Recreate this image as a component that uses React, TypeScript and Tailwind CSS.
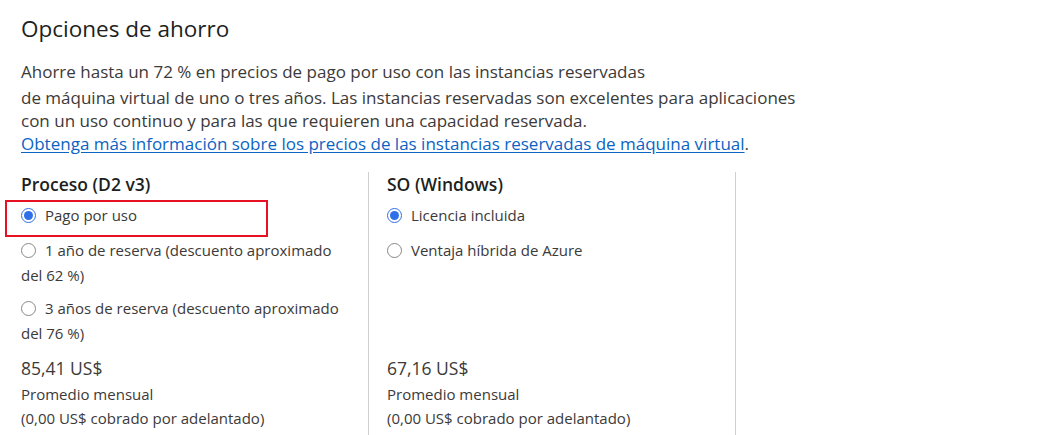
import React from "react";

function Radio({ checked }: { checked?: boolean }) {
  return checked ? (
    <span className="mt-[5px] w-[15px] h-[15px] shrink-0 rounded-full border-[1.5px] border-[#2f6fe8] flex items-center justify-center bg-white">
      <span className="w-[9px] h-[9px] rounded-full bg-[#2f6fe8]" />
    </span>
  ) : (
    <span className="mt-[5px] w-[15px] h-[15px] shrink-0 rounded-full border border-[#8a8886] bg-white" />
  );
}

function Option({ checked, className, children }: { checked?: boolean; className?: string; children: React.ReactNode }) {
  return (
    <div className={"flex items-start gap-[9px] " + (className ?? "")}>
      <Radio checked={checked} />
      <span>{children}</span>
    </div>
  );
}

export default function App() {
  return (
    <div
      className="h-[435px] w-[1048px] overflow-hidden bg-white text-[#323130] pl-[21px]"
      style={{ fontFamily: '"Open Sans", "Noto Sans", Arial, sans-serif' }}
    >
      <h2 className="pt-[14px] text-[22.5px] leading-[30px] text-[#201f1e]">Opciones de ahorro</h2>

      <div className="mt-[15px] text-[17px] leading-[23px] text-[#3b3a39]">
        <p className="leading-[26px]">Ahorre hasta un 72 % en precios de pago por uso con las instancias reservadas</p>
        <p className="mt-[1px]">
          de máquina virtual de uno o tres años. Las instancias reservadas son excelentes para aplicaciones
          <br />
          con un uso continuo y para las que requieren una capacidad reservada.
          <br />
          <a href="#" className="text-[#0b63c4] underline underline-offset-2">
            Obtenga más información sobre los precios de las instancias reservadas de máquina virtual
          </a>
          .
        </p>
      </div>

      <div className="mt-[17px] flex text-[15px] leading-[25px] text-[#3b3a39]">
        <div className="w-[348px] border-r border-[#d2d0ce] flex flex-col pb-[40px]">
          <h3 className="font-semibold text-[#201f1e] text-[17.5px] leading-[25px]">Proceso (D2 v3)</h3>
          <div className="relative mt-[6px] flex flex-col flex-1">
            <div className="absolute left-[-16px] top-[-3px] w-[263px] h-[37px] border-2 border-[#e81123]" />
            <Option checked>Pago por uso</Option>
            <Option className="mt-[10px]">
              1 año de reserva (descuento aproximado
              <br />
              <span className="-ml-[24px]">del 62 %)</span>
            </Option>
            <Option className="mt-[8px]">
              3 años de reserva (descuento aproximado
              <br />
              <span className="-ml-[24px]">del 76 %)</span>
            </Option>
          </div>
          <div className="mt-[9px] leading-[24px]">
            <div className="text-[17.5px] leading-[27px]">85,41 US$</div>
            <div>Promedio mensual</div>
            <div>(0,00 US$ cobrado por adelantado)</div>
          </div>
        </div>

        <div className="w-[367px] border-r border-[#d2d0ce] pl-[18px] flex flex-col pb-[40px]">
          <h3 className="font-semibold text-[#201f1e] text-[17.5px] leading-[25px]">SO (Windows)</h3>
          <div className="mt-[6px] flex flex-col flex-1">
            <Option checked>Licencia incluida</Option>
            <Option className="mt-[10px]">Ventaja híbrida de Azure</Option>
          </div>
          <div className="mt-[9px] leading-[24px]">
            <div className="text-[17.5px] leading-[27px]">67,16 US$</div>
            <div>Promedio mensual</div>
            <div>(0,00 US$ cobrado por adelantado)</div>
          </div>
        </div>
      </div>
    </div>
  );
}
